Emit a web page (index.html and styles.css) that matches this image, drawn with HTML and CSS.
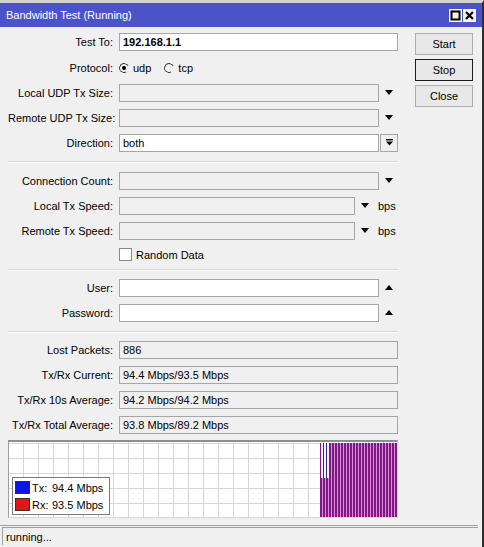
FILE: index.html
```html
<!DOCTYPE html>
<html>
<head>
<meta charset="utf-8">
<title>Bandwidth Test</title>
<link rel="stylesheet" href="styles.css">
</head>
<body>
<div class="window">
  <div class="titlebar">
    <span class="title">Bandwidth Test (Running)</span>
    <div class="tbtns">
      <span class="tbtn"><svg width="11" height="11" viewBox="0 0 11 11"><rect x="1.5" y="1.5" width="8" height="8" fill="none" stroke="#000" stroke-width="2"/></svg></span>
      <span class="tbtn"><svg width="11" height="11" viewBox="0 0 11 11"><path d="M2 2 L9 9 M9 2 L2 9" stroke="#000" stroke-width="2.2"/></svg></span>
    </div>
  </div>
  <div class="content">
    <div class="form">
      <div class="section">
        <div class="row tall"><span class="lbl">Test To:</span><div class="field white bold">192.168.1.1</div></div>
        <div class="row"><span class="lbl">Protocol:</span>
          <div class="radios">
            <span class="radio checked"></span><span class="rtext">udp</span>
            <span class="radio"></span><span class="rtext">tcp</span>
          </div>
        </div>
        <div class="row"><span class="lbl">Local UDP Tx Size:</span><div class="field"></div><span class="drop"><span class="tri-down"></span></span></div>
        <div class="row"><span class="lbl">Remote UDP Tx Size:</span><div class="field"></div><span class="drop"><span class="tri-down"></span></span></div>
        <div class="row"><span class="lbl">Direction:</span><div class="field white">both</div>
          <span class="dirbtn"><svg width="9" height="9" viewBox="0 0 9 9"><rect x="1" y="1" width="7" height="1.4" fill="#000"/><path d="M1 3.6 H8 L4.5 7.6 Z" fill="#000"/></svg></span>
        </div>
      </div>
      <div class="sep s1"></div>
      <div class="section p5">
        <div class="row"><span class="lbl">Connection Count:</span><div class="field"></div><span class="drop"><span class="tri-down"></span></span></div>
        <div class="row"><span class="lbl">Local Tx Speed:</span><div class="field"></div><span class="drop w20"><span class="tri-down"></span></span><span class="unit">bps</span></div>
        <div class="row"><span class="lbl">Remote Tx Speed:</span><div class="field"></div><span class="drop w20"><span class="tri-down"></span></span><span class="unit">bps</span></div>
        <div class="row chk"><span class="checkbox"></span><span class="ctext">Random Data</span></div>
      </div>
      <div class="sep s2"></div>
      <div class="section p4">
        <div class="row"><span class="lbl">User:</span><div class="field white"></div><span class="drop"><span class="tri-up"></span></span></div>
        <div class="row"><span class="lbl">Password:</span><div class="field white"></div><span class="drop"><span class="tri-up"></span></span></div>
      </div>
      <div class="sep s3"></div>
      <div class="section p4">
        <div class="row"><span class="lbl">Lost Packets:</span><div class="field">886</div></div>
        <div class="row"><span class="lbl">Tx/Rx Current:</span><div class="field">94.4 Mbps/93.5 Mbps</div></div>
        <div class="row"><span class="lbl">Tx/Rx 10s Average:</span><div class="field">94.2 Mbps/94.2 Mbps</div></div>
        <div class="row"><span class="lbl">Tx/Rx Total Average:</span><div class="field">93.8 Mbps/89.2 Mbps</div></div>
      </div>
      <div class="graph">
        <div class="bars"></div>
        <div class="bars-start"></div>
        <div class="legend">
          <div class="lg-row"><span class="sw blue"></span><span class="lg-k">Tx:</span><span>94.4 Mbps</span></div>
          <div class="lg-row"><span class="sw red"></span><span class="lg-k">Rx:</span><span>93.5 Mbps</span></div>
        </div>
      </div>
    </div>
    <div class="buttons">
      <div class="btn">Start</div>
      <div class="btn default">Stop</div>
      <div class="btn">Close</div>
    </div>
  </div>
  <div class="status">
    <div class="statusbox">running...</div>
  </div>
</div>
</body>
</html>
```
FILE: styles.css
```css
* { box-sizing: border-box; margin: 0; padding: 0; }
html, body { width: 484px; height: 547px; overflow: hidden; }
body {
  font-family: "Liberation Sans", Arial, sans-serif;
  font-size: 11px;
  color: #000;
  background: #f0f0f0;
}
.window {
  width: 484px;
  height: 547px;
  display: flex;
  flex-direction: column;
  background: #f0f0f0;
  border-top: 3px solid #d2d2d2;
  border-right: 2px solid #2e2e2e;
}
.titlebar {
  height: 24px;
  flex: none;
  background: #4b53c6;
  color: #fff;
  display: flex;
  align-items: center;
  justify-content: space-between;
  padding: 0 6px 0 6px;
  font-size: 11px;
}
.tbtns { display: flex; gap: 1px; }
.tbtn {
  width: 13px;
  height: 13px;
  background: #f2f2f2;
  display: flex;
  align-items: center;
  justify-content: center;
}
.content {
  display: flex;
  padding: 2px 0 0 8px;
  flex: none;
}
.form { width: 390px; display: flex; flex-direction: column; flex: none; }
.buttons {
  margin-left: 17px;
  width: 58px;
  padding-top: 4px;
  display: flex;
  flex-direction: column;
  gap: 4px;
  flex: none;
}
.btn {
  height: 22px;
  border: 1px solid #adadad;
  background: #e8e8e8;
  display: flex;
  align-items: center;
  justify-content: center;
}
.btn.default { border-color: #1c1c1c; }
.section { display: flex; flex-direction: column; }
.section.p5 { padding-top: 5px; }
.section.p4 { padding-top: 4px; }
.row { display: flex; align-items: center; height: 25px; }
.row.tall { height: 26px; }
.lbl {
  width: 105px;
  text-align: right;
  margin-right: 6px;
  flex: none;
  white-space: nowrap;
}
.field {
  flex: 1;
  height: 18px;
  border: 1px solid #a6a6a6;
  background: #f0f0f0;
  display: flex;
  align-items: center;
  padding-left: 3px;
  white-space: nowrap;
  overflow: hidden;
}
.field.white { background: #fff; }
.bold { font-weight: bold; }
.drop {
  width: 19px;
  height: 18px;
  flex: none;
  display: flex;
  justify-content: center;
  align-items: center;
}
.drop.w20 { width: 20px; }
.tri-down {
  width: 0; height: 0;
  border-left: 4.5px solid transparent;
  border-right: 4.5px solid transparent;
  border-top: 5px solid #000;
}
.tri-up {
  width: 0; height: 0;
  border-left: 4.5px solid transparent;
  border-right: 4.5px solid transparent;
  border-bottom: 5px solid #000;
}
.unit { width: 23px; padding-left: 3px; flex: none; }
.dirbtn {
  width: 18px;
  height: 18px;
  margin-left: 1px;
  border: 1px solid #a6a6a6;
  background: #f0f0f0;
  flex: none;
  display: flex;
  align-items: center;
  justify-content: center;
}
.radios { display: flex; align-items: center; }
.radio {
  width: 10px;
  height: 10px;
  border-radius: 50%;
  border: 1px solid;
  border-color: #333 transparent #333 #333;
  transform: rotate(20deg);
  display: flex;
  align-items: center;
  justify-content: center;
  margin-right: 4px;
}
.radio.checked::after {
  content: "";
  width: 4px;
  height: 4px;
  border-radius: 50%;
  background: #000;
}
.rtext { margin-right: 13px; }
.row.chk { height: 23px; padding-left: 111px; }
.checkbox {
  width: 13px;
  height: 13px;
  border: 1px solid #8a8a8a;
  background: #fff;
  flex: none;
}
.ctext { margin-left: 4px; }
.sep {
  height: 2px;
  flex: none;
  border-top: 1px solid #d9d9d9;
  border-bottom: 1px solid #fbfbfb;
}
.sep.s1 { margin-top: 6px; }
.sep.s2 { margin-top: 3px; }
.sep.s3 { margin-top: 6px; }
.graph {
  position: relative;
  margin-top: 3px;
  height: 78px;
  border-top: 2px solid #8e8e8e;
  border-left: 1px solid #a0a0a0;
  border-right: 1px solid #d8d8d8;
  border-bottom: 1px solid #d8d8d8;
  background-color: #fff;
  background-image:
    linear-gradient(to right, #d6d6d6 1px, transparent 1px),
    linear-gradient(to bottom, #d6d6d6 1px, transparent 1px);
  background-size: 15px 15px;
  background-position: 14px 1px;
}
.bars {
  position: absolute;
  left: 311px;
  right: 0;
  top: 1px;
  bottom: 0;
  background: repeating-linear-gradient(to right, #7e1a80 0, #7e1a80 2px, #dc8ce0 2px, #dc8ce0 3px);
}
.bars-start {
  position: absolute;
  left: 312px;
  width: 8px;
  top: 1px;
  height: 35px;
  background: repeating-linear-gradient(to right, #f2f2ff 0, #f2f2ff 2px, #3a2a8a 2px, #3a2a8a 3px);
}
.legend {
  position: absolute;
  left: 3px;
  top: 35px;
  width: 98px;
  height: 38px;
  background: #fff;
  border: 1px solid #7a7a7a;
  padding: 2px 2px;
  display: flex;
  flex-direction: column;
  gap: 2px;
}
.lg-row { display: flex; align-items: center; height: 15px; }
.sw {
  width: 15px;
  height: 13px;
  border: 1px solid #333;
  margin-right: 2px;
  flex: none;
}
.sw.blue { background: #0a14e6; }
.sw.red { background: #e21616; }
.lg-k { width: 20px; }
.status {
  margin-top: 7px;
  width: 478px;
  border-top: 1px solid #a0a0a0;
  padding: 1px 0 0 2px;
}
.statusbox {
  height: 18px;
  border-top: 1px solid #a0a0a0;
  border-left: 1px solid #a0a0a0;
  padding-left: 3px;
  display: flex;
  align-items: center;
}
```
